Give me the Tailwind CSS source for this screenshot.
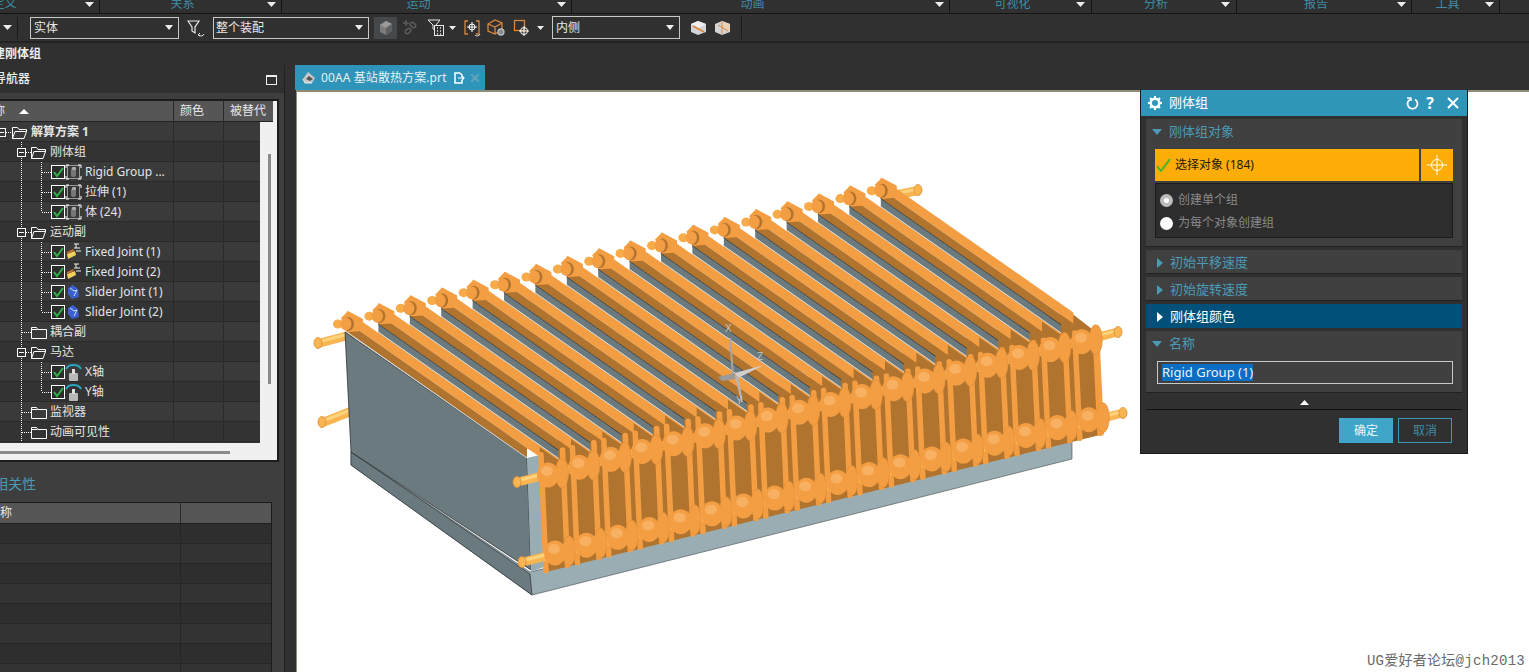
<!DOCTYPE html>
<html lang="zh">
<head>
<meta charset="UTF-8">
<title>刚体组</title>
<script src="https://cdn.jsdelivr.net/npm/@tailwindcss/browser@4"></script>
</head>
<body class="h-screen overflow-hidden bg-[#303030] text-[12px] text-[#e4e4e4] font-['Noto_Sans','Noto_Sans_CJK_SC',sans-serif]">
<div class="relative flex h-[672px] w-[1529px] flex-col overflow-hidden">

  <!-- ribbon group labels -->
  <div class="flex h-[14px] shrink-0 border-b border-[#141414] text-[#3f8ba6] leading-[12px]">
    <div class="relative -ml-[74px] flex w-[174px] justify-center border-r border-[#141414] pr-[16px]"><span class="-mt-[2px]">定义</span></div>
    <div class="flex w-[182px] justify-center border-r border-[#141414] pr-[16px]"><span class="-mt-[2px]">关系</span></div>
    <div class="flex w-[290px] justify-center border-r border-[#141414] pr-[16px]"><span class="-mt-[2px]">运动</span></div>
    <div class="flex w-[378px] justify-center border-r border-[#141414] pr-[16px]"><span class="-mt-[2px]">动画</span></div>
    <div class="flex w-[142px] justify-center border-r border-[#141414] pr-[16px]"><span class="-mt-[2px]">可视化</span></div>
    <div class="flex w-[145px] justify-center border-r border-[#141414] pr-[16px]"><span class="-mt-[2px]">分析</span></div>
    <div class="flex w-[175px] justify-center border-r border-[#141414] pr-[16px]"><span class="-mt-[2px]">报告</span></div>
    <div class="flex w-[88px] justify-center border-r border-[#141414] pr-[16px]"><span class="-mt-[2px]">工具</span></div>
  </div>

  <!-- selection toolbar -->
  <div class="flex h-[29px] shrink-0 items-center border-b-2 border-[#222222]">
    <svg class="ml-[3px] h-[5px] w-[9px]" viewBox="0 0 9 5"><path d="M0 0h9L4.500 5z" fill="#eee"/></svg>
    <div class="ml-[5px] h-[22px] w-px bg-[#1a1a1a]"></div>
    <div class="ml-[12px] flex h-[22px] w-[149px] items-center justify-between border border-[#c8c8c8] pl-[3px] pr-[5px] text-[#e8e8e8]"><span>实体</span><svg class="h-[5px] w-[8px]" viewBox="0 0 8 5"><path d="M0 0h8L4 5z" fill="#eee"/></svg></div>
    <svg class="ml-[8px] h-[18px] w-[18px]" viewBox="0 0 18 18" fill="none" stroke="#e8e8e8" stroke-width="1.200"><path d="M1 2h11L8 8v6L5 12V8z"/><path d="M17 15a3 3 0 0 1-5 1M13 14l-2 2 2 1" stroke-width="1"/></svg>
    <div class="ml-[8px] flex h-[22px] w-[156px] items-center justify-between border border-[#c8c8c8] pl-[2px] pr-[5px] text-[#e8e8e8]"><span>整个装配</span><svg class="h-[5px] w-[8px]" viewBox="0 0 8 5"><path d="M0 0h8L4 5z" fill="#eee"/></svg></div>
    <div class="ml-[5px] flex h-[22px] w-[23px] items-center justify-center bg-[#45494c]">
      <svg class="h-[16px] w-[14px]" viewBox="0 0 14 16"><path d="M1 5l6-4 6 3v7l-6 4-6-3z" fill="#7c7c7c"/><path d="M1 5l6 3 6-4-6-3z" fill="#9a9a9a"/><path d="M7 8v7l6-4V4z" fill="#5f5f5f"/></svg>
    </div>
    <svg class="ml-[5px] h-[18px] w-[18px]" viewBox="0 0 18 18" fill="none" stroke="#5c5c5c" stroke-width="1.500"><path d="M4 1v6M1 4h6"/><rect x="8" y="4" width="6" height="4" rx="2" transform="rotate(40 11 6)"/><rect x="3" y="10" width="6" height="4" rx="2" transform="rotate(-40 6 12)"/></svg>
    <svg class="ml-[7px] h-[20px] w-[18px]" viewBox="0 0 18 20" fill="none" stroke="#e8e8e8"><path d="M1 2h12L9 7v5L6 11V7z"/><rect x="7.500" y="7.500" width="9" height="10" fill="#303030"/><path d="M10 10h1M13 10h1M10 13h1M13 13h1M10 16h1M13 16h1" stroke-width="1.400"/></svg>
    <svg class="ml-[4px] h-[4px] w-[7px]" viewBox="0 0 7 4"><path d="M0 0h7L3.500 4z" fill="#eee"/></svg>
    <svg class="ml-[7px] h-[20px] w-[19px]" viewBox="0 0 19 20" fill="none"><path d="M5 3H2v13h3M13 3h3v13h-3" stroke="#d8873c" stroke-width="1.300"/><circle cx="9" cy="9" r="3" stroke="#fff"/><path d="M9 4v10M4 9h10" stroke="#fff"/><path d="M17 16a3 3 0 0 1-5 1" stroke="#ddd"/></svg>
    <svg class="ml-[5px] h-[20px] w-[19px]" viewBox="0 0 19 20" fill="none" stroke="#d8873c" stroke-width="1.300"><path d="M1 6l7-4 7 3v7l-7 4-7-3zM1 6l7 3 7-4M8 9v7"/><circle cx="14" cy="14" r="3" fill="#888" stroke="#bbb"/></svg>
    <svg class="ml-[7px] h-[20px] w-[18px]" viewBox="0 0 18 20" fill="none"><rect x="1.500" y="2.500" width="10" height="10" stroke="#d8873c" stroke-width="1.300"/><circle cx="11" cy="13" r="3.500" stroke="#fff"/><path d="M11 8v10M6 13h10" stroke="#fff"/></svg>
    <svg class="ml-[6px] h-[4px] w-[7px]" viewBox="0 0 7 4"><path d="M0 0h7L3.500 4z" fill="#eee"/></svg>
    <div class="ml-[8px] flex h-[23px] w-[128px] items-center justify-between border border-[#c8c8c8] pl-[3px] pr-[5px] text-[#e8e8e8]"><span>内侧</span><svg class="h-[5px] w-[8px]" viewBox="0 0 8 5"><path d="M0 0h8L4 5z" fill="#eee"/></svg></div>
    <svg class="ml-[10px] h-[16px] w-[17px]" viewBox="0 0 17 16"><path d="M1 4l7-3 8 3v8l-8 3-7-3z" fill="#d4d4d4"/><path d="M1 4l8 4 7-4-8-3z" fill="#f0f0f0"/><path d="M3 6l11 6" stroke="#d8873c" stroke-width="1.500"/></svg>
    <svg class="ml-[7px] h-[16px] w-[17px]" viewBox="0 0 17 16"><path d="M1 4l7-3 8 3v8l-8 3-7-3z" fill="#d4d4d4"/><path d="M8 1v6l8 5V4z" fill="#e8d0b8"/><path d="M8 2v12M4 5l10 6" stroke="#d8873c"/></svg>
    <div class="ml-[10px] h-[23px] w-px bg-[#1a1a1a]"></div>
  </div>

  <div class="flex h-[22px] shrink-0 items-center overflow-hidden"><span class="-ml-[7px] font-bold text-[#eeeeee]">建刚体组</span></div>

  <div class="flex min-h-0 flex-1">
    <!-- navigator column -->
    <div class="flex w-[296px] shrink-0">
      <div class="flex w-[285px] flex-col overflow-hidden border-r border-[#222222]">
        <div class="flex h-[28px] shrink-0 items-center justify-between pr-[7px]">
          <span class="-ml-[6px] text-[#eeeeee] font-medium">导航器</span>
          <div class="mt-[2px] h-[10px] w-[11px] border border-[#eeeeee] border-t-2"></div>
        </div>
        <div class="flex-1 bg-[#3e3e3e] pt-[6px]">
          <div class="h-[363px] w-[279px] overflow-hidden border-y-2 border-r-2 border-[#1c1c1c] bg-[#f0f0f0]">
            <div class="flex h-[21px] w-[273px] border-b border-[#222222] bg-[#565656] text-[#e8e8e8]">
              <div class="flex w-[174px] items-center border-r border-[#2a2a2a]"><span class="-ml-[19px]">名称</span><svg class="ml-[14px] h-[5px] w-[10px]" viewBox="0 0 10 5"><path d="M0 5h10L5 0z" fill="#fff"/></svg></div>
              <div class="flex w-[50px] items-center border-r border-[#2a2a2a] pl-[6px]">颜色</div>
              <div class="flex flex-1 items-center pl-[6px]">被替代</div>
            </div>
            <div class="flex h-[321px]">
              <div id="tree" class="w-[260px] shrink-0 overflow-hidden bg-[#333333]"></div>
              <div class="pl-[8px] pt-[32px]"><div class="h-[230px] w-[3px] bg-[#8a8a8a]"></div></div>
            </div>
            <div class="pt-[8px]"><div class="h-[3px] w-[230px] bg-[#8a8a8a]"></div></div>
          </div>
          <div class="flex h-[40px] items-center overflow-hidden pt-[2px]"><span class="-ml-[6px] text-[14px] text-[#4b9ab6]">相关性</span></div>
          <div class="w-[272px] overflow-hidden border-r border-t border-[#1c1c1c]">
            <div class="flex h-[21px] border-b border-[#222222] bg-[#565656] text-[#e8e8e8]">
              <div class="flex w-[181px] items-center border-r border-[#2a2a2a]"><span class="-ml-[12px]">名称</span></div>
            </div>
            <div id="dep"></div>
          </div>
        </div>
      </div>
    </div>

    <!-- graphics area -->
    <div class="flex min-w-0 flex-1 flex-col">
      <div class="flex h-[25px] shrink-0 -ml-px">
        <div class="flex w-[190px] items-center bg-[#2f94b9] pl-[6px] text-[12px] text-[#e4f0f4]">
          <svg class="h-[15px] w-[16px]" viewBox="0 0 16 15"><path d="M2 9l5-7 7 6-3 5H4z" fill="#c8c8c8"/><path d="M5 9l3-3 4 3-3 2z" fill="#555"/><path d="M2 9l2 4h7" fill="none" stroke="#eee"/></svg>
          <span class="ml-[4px] whitespace-nowrap tracking-[0.1px]">00AA 基站散热方案.prt</span>
          <svg class="ml-[6px] h-[12px] w-[12px]" viewBox="0 0 12 12" fill="none" stroke="#fff" stroke-width="1.500"><path d="M7 1H2v10h7V8M7 1l2 2v2"/><path d="M5 6h6M9 4l2 2-2 2" stroke-width="1.200"/></svg>
          <svg class="ml-[6px] h-[8px] w-[8px]" viewBox="0 0 8 8" stroke="#5fa3bb" stroke-width="2"><path d="M0 0l8 8M8 0L0 8"/></svg>
        </div>
      </div>
      <div id="view" class="relative min-h-0 flex-1 border-l border-t-2 border-[#8f8d78] bg-white"></div>
    </div>
  </div>

  <!-- rigid group dialog -->
  <div class="absolute left-[1140px] top-[90px] flex h-[364px] w-[328px] flex-col border border-[#1c1c1c] border-t-0 bg-[#303030]">
    <div class="flex h-[26px] shrink-0 items-center bg-[#3096b9] pl-[7px] pr-[8px] text-[13px] text-white">
      <svg class="h-[14px] w-[14px]" viewBox="0 0 14 14"><circle cx="7" cy="7" r="4.300" fill="none" stroke="#fff" stroke-width="2.600"/><path d="M7 0v3M7 11v3M0 7h3M11 7h3M2 2l2 2M10 10l2 2M12 2l-2 2M4 10l-2 2" stroke="#fff" stroke-width="2"/></svg>
      <span class="ml-[7px]">刚体组</span>
      <svg class="ml-auto h-[13px] w-[13px]" viewBox="0 0 13 13" fill="none" stroke="#fff" stroke-width="1.800"><path d="M4 2.500a5 5 0 1 0 5 0"/><path d="M1 1l4 0 0 3" stroke-width="1.400"/></svg>
      <span class="ml-[7px] text-[16px] font-bold leading-none">?</span>
      <svg class="ml-[13px] h-[12px] w-[12px]" viewBox="0 0 12 12" stroke="#fff" stroke-width="2"><path d="M1 1l10 10M11 1L1 11"/></svg>
    </div>
    <div class="flex flex-1 flex-col px-[5px] pt-[3px] text-[13px] text-[#4b9ab6]">
      <section class="h-[128px] border-b border-[#222222] bg-[#404040] px-[9px]">
        <div class="flex h-[26px] items-center"><svg class="-ml-[3px] h-[6px] w-[10px]" viewBox="0 0 10 6"><path d="M0 0h10L5 6z" fill="#4b9ab6"/></svg><span class="ml-[7px]">刚体组对象</span></div>
        <div class="mt-[4px] flex h-[32px] gap-[2px] text-[12px] text-[#1f1a10]">
          <div class="flex flex-1 items-center bg-[#fdad08]">
            <svg class="ml-px h-[14px] w-[15px]" viewBox="0 0 15 14" fill="none" stroke="#46b52e" stroke-width="2"><path d="M1 8l4 5L14 1"/></svg>
            <span class="ml-[4px]">选择对象 (184)</span>
          </div>
          <div class="flex w-[32px] items-center justify-center bg-[#fdad08]">
            <svg class="h-[20px] w-[20px]" viewBox="0 0 20 20" fill="none" stroke="#fff"><circle cx="10" cy="10" r="5.500"/><path d="M10 0v20M0 10h20"/></svg>
          </div>
        </div>
        <div class="mt-[2px] h-[55px] border border-[#1c1c1c] bg-[#2d2d2d] px-[4px] pt-[8px] text-[12px] text-[#8a8a8a]">
          <div class="flex h-[16px] items-center"><span class="flex h-[13px] w-[13px] items-center justify-center rounded-full bg-[#bcbcbc]"><span class="h-[5px] w-[5px] rounded-full bg-white"></span></span><span class="ml-[5px]">创建单个组</span></div>
          <div class="mt-[7px] flex h-[16px] items-center"><span class="h-[13px] w-[13px] rounded-full bg-white"></span><span class="ml-[5px]">为每个对象创建组</span></div>
        </div>
      </section>
      <section class="mt-[3px] flex h-[24px] items-center border-b border-[#222222] bg-[#404040] pl-[11px] pt-[2px]"><svg class="h-[10px] w-[6px]" viewBox="0 0 6 10"><path d="M0 0l6 5-6 5z" fill="#4b9ab6"/></svg><span class="ml-[7px]">初始平移速度</span></section>
      <section class="mt-[3px] flex h-[24px] items-center border-b border-[#222222] bg-[#404040] pl-[11px] pt-[2px]"><svg class="h-[10px] w-[6px]" viewBox="0 0 6 10"><path d="M0 0l6 5-6 5z" fill="#4b9ab6"/></svg><span class="ml-[7px]">初始旋转速度</span></section>
      <section class="mt-[3px] flex h-[24px] items-center bg-[#00507a] pl-[11px] pt-[2px] text-white"><svg class="h-[10px] w-[6px]" viewBox="0 0 6 10"><path d="M0 0l6 5-6 5z" fill="#fff"/></svg><span class="ml-[7px]">刚体组颜色</span></section>
      <section class="mt-[3px] h-[62px] border-b border-[#222222] bg-[#404040] pl-[11px] pr-[9px]">
        <div class="flex h-[25px] items-center"><svg class="-ml-[5px] h-[6px] w-[10px]" viewBox="0 0 10 6"><path d="M0 0h10L5 6z" fill="#4b9ab6"/></svg><span class="ml-[7px]">名称</span></div>
        <div class="mt-[5px] flex h-[23px] items-center border border-[#c8c8c8] pl-[4px] text-[#f0f0f0]"><span class="bg-[#0a6ec4] leading-[17px]">Rigid Group (1)</span></div>
      </section>
      <div class="flex h-[17px] shrink-0 items-center justify-center border-b border-[#111111] pt-[2px]"><svg class="h-[5px] w-[9px]" viewBox="0 0 9 5"><path d="M0 5h9L4.500 0z" fill="#fff"/></svg></div>
      <div class="flex justify-end gap-[5px] pr-[10px] pt-[8px] text-[12px]">
        <div class="flex h-[25px] w-[54px] items-center justify-center bg-[#40a6c9] text-[#eaf6fa]">确定</div>
        <div class="flex h-[25px] w-[54px] items-center justify-center border border-[#3a97b8] text-[#3f8ba6]">取消</div>
      </div>
    </div>
  </div>

  <!-- ribbon arrows sit on the group bar -->
  <div id="arrows"></div>

  <div class="absolute bottom-[3px] right-[4px] font-['Liberation_Mono','Noto_Sans_CJK_SC',monospace] text-[14px] leading-[16px] tracking-[0.27px] text-[#6a6a6a]">UG爱好者论坛@jch2013</div>
</div>

<script>
  // ribbon dropdown arrows
  document.getElementById("arrows").innerHTML = [89, 271, 561, 939, 1080, 1225, 1401, 1489].map(x =>
    `<svg class="absolute top-[2px]" style="left:${x-4}px" width="9" height="5" viewBox="0 0 9 5"><path d="M0 0h9L4.500 5z" fill="#eee"/></svg>`).join("");

  // navigator tree
  const CHECK = `<rect x="51.500" y="3.500" width="13" height="13" fill="#2c2c2c" stroke="#fff"/><path d="M54 10l3 4 6-8" fill="none" stroke="#2fb34a" stroke-width="2"/>`;
  const ICONS = {
    rigid: `<rect x="67.500" y="3.500" width="12" height="13" fill="none" stroke="#ddd" stroke-width=".6"/><path d="M66 3h3M66 3v3M78 3h3M81 3v3M66 17h3M66 14v3M78 17h3M81 14v3" stroke="#fff"/><rect x="71" y="6" width="5" height="9" rx="2" fill="#777"/><rect x="72" y="5" width="4" height="3" rx="1" fill="#aaa"/>`,
    fixed: `<path d="M67 12l8-3 1 4-8 4z" fill="#f1d35c"/><path d="M67 12l7-3-1-2-6 3z" fill="#c2702c"/><path d="M74 2h5M76 2v4M74 6h6M76 9h5" stroke="#eee"/>`,
    slider: `<path d="M68 6l5-3 5 4 1 8-7 2-4-5z" fill="#3c5fd0"/><path d="M70 6l4 3 3-1-3 6" stroke="#cfe0ff" fill="none"/>`,
    motor: `<path d="M66 7a8 6 0 0 1 15 0" fill="none" stroke="#2aa7bd" stroke-width="2"/><rect x="69" y="11" width="9" height="8" rx="1" fill="#b8b8b8"/><rect x="72" y="7" width="3" height="5" fill="#ddd"/>`
  };
  const OPEN_FOLDER = x => `<path d="M${x}.500 16.500v-11h5l1.500 2h7.500v2M${x}.500 16.500h11.500l2.500-7h-11.500z" fill="none" stroke="#fff"/>`;
  const SHUT_FOLDER = x => `<path d="M${x}.500 16.500v-11h5l1.500 2h8.500v9z" fill="none" stroke="#fff"/><path d="M${x}.500 7.500h6" stroke="#fff"/>`;
  const dots = d => `<path d="${d}" stroke="#fff" stroke-dasharray="1 1" fill="none"/>`;
  const rows = [
    [0, "解算方案 1"], [1, "刚体组", "open"],
    [2, "Rigid Group ...", "rigid"], [2, "拉伸 (1)", "rigid"], [2, "体 (24)", "rigid", 1],
    [1, "运动副", "open"],
    [2, "Fixed Joint (1)", "fixed"], [2, "Fixed Joint (2)", "fixed"], [2, "Slider Joint (1)", "slider"], [2, "Slider Joint (2)", "slider", 1],
    [1, "耦合副", "shut"], [1, "马达", "open"],
    [2, "X轴", "motor"], [2, "Y轴", "motor", 1],
    [1, "监视器", "shut"], [1, "动画可见性", "shut"]
  ];
  document.getElementById("tree").innerHTML = rows.map(([lvl, label, kind, last], i) => {
    let g = "";
    if (lvl > 0) g += dots("M21.500 0v20");
    if (lvl === 0) {
      g += `<rect x="-3.500" y="6.500" width="9" height="8" fill="none" stroke="#fff"/><path d="M-1 10.500h5" stroke="#fff"/>` + dots("M6 10.500h6") + OPEN_FOLDER(12);
    } else if (lvl === 1) {
      if (kind === "open") g += `<rect x="17.500" y="6.500" width="8" height="8" fill="#333" stroke="#fff"/><path d="M19 10.500h5" stroke="#fff"/>` + dots("M26 10.500h5") + OPEN_FOLDER(31);
      else g += dots("M22 10.500h9") + SHUT_FOLDER(31);
    } else {
      g += dots(`M41.500 0v${last ? 10 : 20}M42 10.500h9`) + CHECK + ICONS[kind];
    }
    const width = [31, 50, 85][lvl];
    return `<div class="flex h-[20px] border-b border-[#2a2a2a] ${i % 2 ? "bg-[#333333]" : "bg-[#3a3a3a]"}">
      <div class="flex w-[174px] shrink-0 items-center border-r border-[#2a2a2a]">
        <svg class="h-[20px] shrink-0 overflow-visible" width="${width}" viewBox="0 0 ${width} 20">${g}</svg>
        <span class="whitespace-nowrap text-[#e4e4e4] ${lvl === 0 ? "font-bold" : ""}">${label}</span>
      </div>
      <div class="w-[50px] shrink-0 border-r border-[#2a2a2a]"></div>
    </div>`;
  }).join("");

  let dep = "";
  for (let i = 0; i < 8; i++) {
    dep += `<div class="h-[20px] border-b border-[#262626] ${i % 2 ? "bg-[#333333]" : "bg-[#2e2e2e]"}"><div class="h-full w-[181px] border-r border-[#262626]"></div></div>`;
  }
  document.getElementById("dep").innerHTML = dep;

  // heat-sink model, coordinates are page pixels
  const LIGHT = "#f49e43", DARK = "#b1742f", ROD = "#f8b552", HI = "#ffd27c", GREY = "#6a7a7f", PALE = "#9aadb3";
  const FINS = 18, STEP_X = 31.4, STEP_Y = -7.84, DX = 180, DY = 126;
  const poly = (pts, fill, extra = "") => `<polygon points="${pts.map(p => p.join(",")).join(" ")}" fill="${fill}" ${extra}/>`;
  const line = (a, b, c, w) => `<line x1="${a[0]}" y1="${a[1]}" x2="${b[0]}" y2="${b[1]}" stroke="${c}" stroke-width="${w}" stroke-linecap="round"/>`;
  const rod = (a, b) => line(a, b, ROD, 9) + line([a[0], a[1] - 1.500], [b[0], b[1] - 1.500], HI, 3);
  const cap = (x, y) => `<ellipse cx="${x}" cy="${y}" rx="4" ry="5.500" fill="${ROD}" stroke="#e08c33" stroke-width=".8"/>`;

  let m = "";
  // base plate
  m += poly([[351, 452], [530, 572], [1072, 440], [1072, 459], [532, 595], [351, 465]], PALE, 'stroke="#3c474b" stroke-width=".6"');
  m += poly([[351, 452], [530, 574], [532, 595], [351, 465]], GREY, 'stroke="#2c3437" stroke-width=".7"');
  // rear pipe stubs
  m += rod([320, 343], [350, 335]) + cap(318, 343) + rod([324, 422], [352, 411]) + cap(322, 422) + rod([885, 197], [916, 191]) + cap(918, 190);
  // outer plate face
  m += poly([[345, 332], [527, 458], [531, 570], [351, 452]], GREY, 'stroke="#222" stroke-width=".7"');
  m += poly([[527, 458], [540, 455], [546, 566], [531, 572]], PALE);
  // back of the front face, seen between the strip ends
  m += poly([[527, 448], [1070, 312], [1097, 333], [1100, 435], [546, 572], [540, 455]], DARK);
  // top strips
  for (let i = 0; i < FINS; i++) {
    const ox = 347 + STEP_X * i, oy = 332 + STEP_Y * i;
    const at = (t, v) => [+(ox + DX * t).toFixed(1), +(oy + DY * t + v).toFixed(1)];
    m += poly([at(0, -21), at(1.07, -21), at(1.07, -10), at(0, -10)], LIGHT);
    m += poly([at(0, -10), at(1, -10), at(1, 0), at(0, 0)], DARK);
    if (i > 0) {
      m += poly([at(0, 0), at(1, 0), at(1, 8), at(0, 8)], GREY);
      m += line(at(0, 0), at(1, 0), "#20282b", .7);
      m += poly([at(0, 8), at(1, 8), at(1, 10), at(0, 10)], LIGHT);
    }
    m += line(at(0, i ? 8 : 0), at(1, i ? 8 : 0), "#d2dbde", 1);
  }
  // rear flanges
  for (let i = 0; i < FINS; i++) {
    const ox = 347 + STEP_X * i, oy = 332 + STEP_Y * i;
    m += `<ellipse cx="${ox - 9}" cy="${oy - 8}" rx="5" ry="4.500" fill="#f7ab49"/>`;
    m += `<path d="M${ox - 6} ${oy - 14}l7 -7 15 8 0 12 -15 1z" fill="${LIGHT}"/>`;
    m += `<ellipse cx="${ox + 1}" cy="${oy - 8}" rx="6" ry="7" fill="${DARK}"/><ellipse cx="${ox - 1}" cy="${oy - 8}" rx="5.500" ry="6.500" fill="${LIGHT}"/>`;
  }
  // front ribs
  const topY = x => 458 - 0.228 * (x - 527), botY = x => 574 - 0.248 * (x - 527);
  const rib = x => line([x, topY(x)], [x + 5, botY(x)], LIGHT, 5.500);
  for (let i = 0; i < FINS; i++) {
    const x = 541 + STEP_X * i;
    m += rib(x) + rib(x + 21.500);
  }
  m += rib(1095);
  // pipes and bosses
  m += rod([522, 481], [1114, 333]) + cap(517, 482) + cap(1118, 332);
  m += rod([527, 561], [1119, 414]) + cap(522, 562) + cap(1123, 413);
  for (let i = 0; i < FINS; i++) {
    [[548, 475], [555, 553]].forEach(([x0, y0]) => {
      const x = x0 + STEP_X * i, y = y0 + STEP_Y * i;
      m += `<ellipse cx="${x + 14}" cy="${y - 2}" rx="6.500" ry="15" fill="${LIGHT}" stroke="#e28f36" stroke-width=".7"/>`;
      m += `<ellipse cx="${x}" cy="${y}" rx="11" ry="12.500" fill="${LIGHT}"/>`;
      m += `<ellipse cx="${x - 1}" cy="${y - 4}" rx="6" ry="5" fill="#f8b163"/>`;
    });
  }
  // coordinate triad
  m += poly([[729, 338], [731, 338], [734, 375], [732, 375]], "#a6a6a6");
  m += poly([[735, 373], [764, 365], [738, 378]], "#d0d0d0");
  m += poly([[735, 376], [738, 376], [743, 402], [741, 402]], "#b5b5b5");
  m += poly([[718, 377], [735, 373], [735, 379], [722, 381]], "#9a9a9a");
  m += `<g font-family="Liberation Sans" font-size="10" fill="#c4c4c4"><text x="725" y="332">X</text><text x="757" y="360">Z</text><text x="736" y="404">Y</text></g>`;

  document.getElementById("view").innerHTML =
    `<svg class="absolute left-0 top-0" width="1232" height="580" viewBox="297 92 1232 580">${m}</svg>`;
</script>
</body>
</html>
